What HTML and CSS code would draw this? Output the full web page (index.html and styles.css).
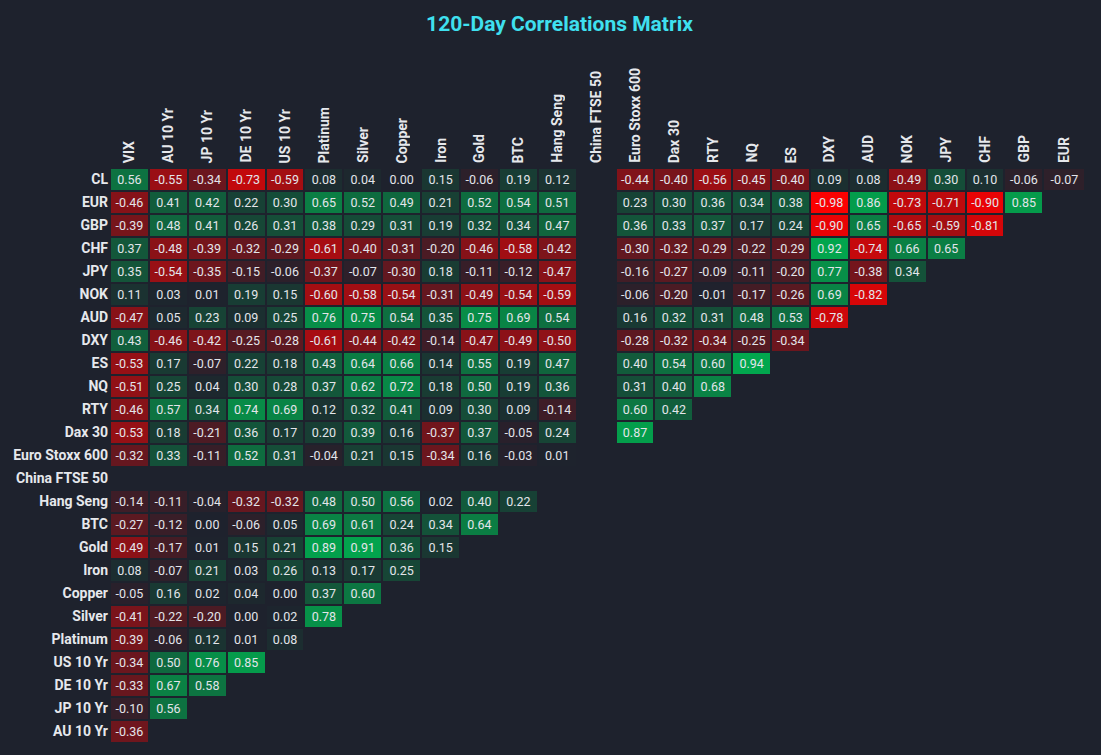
FILE: index.html
```html
<!DOCTYPE html>
<html lang="en">
<head>
<meta charset="utf-8">
<title>120-Day Correlations Matrix</title>
<link rel="stylesheet" href="styles.css">
</head>
<body>
<main class="page">
  <h1 class="title">120-Day Correlations Matrix</h1>
  <div class="matrix" id="matrix"></div>
</main>
<script src="script.js"></script>
</body>
</html>
```

FILE: styles.css
```css
html, body {
  margin: 0;
  background: #1e222d;
}

body {
  font-family: Roboto, "Liberation Sans", Arial, sans-serif;
  color: #e3e5ea;
}

.page {
  padding: 11px 0 0 8px;
}

.title {
  margin: 0;
  padding-left: 10px;
  text-align: center;
  font-size: 21px;
  line-height: 26px;
  font-weight: 700;
  color: #3fe0ef;
}

.matrix {
  display: grid;
  grid-template-columns: 101px repeat(24, 36.9px) 40px;
  grid-template-rows: 130px;
  grid-auto-rows: 21px;
  gap: 2px;
}

.corner {
  min-width: 0;
}

.hdr {
  display: flex;
  align-items: flex-end;
  justify-content: center;
  padding-bottom: 4px;
  overflow: visible;
}

.hdr-text {
  writing-mode: vertical-rl;
  transform: rotate(180deg);
  white-space: nowrap;
  font-size: 14px;
  font-weight: 700;
  line-height: 1;
  color: #e6e8ec;
}

.row-label {
  text-align: right;
  padding-right: 1px;
  white-space: nowrap;
  font-size: 14px;
  font-weight: 700;
  line-height: 21px;
  color: #e6e8ec;
}

.cell {
  text-align: center;
  font-size: 12.5px;
  line-height: 21px;
  color: #e3e5ea;
}

.cell-empty {
  background: transparent;
}
```

FILE: script.js
```js
(function () {
  var cols = ["VIX", "AU 10 Yr", "JP 10 Yr", "DE 10 Yr", "US 10 Yr", "Platinum", "Silver", "Copper", "Iron", "Gold", "BTC", "Hang Seng", "China FTSE 50", "Euro Stoxx 600", "Dax 30", "RTY", "NQ", "ES", "DXY", "AUD", "NOK", "JPY", "CHF", "GBP", "EUR"];
  var N = null;
  var rows = [
    ["CL", [0.56, -0.55, -0.34, -0.73, -0.59, 0.08, 0.04, 0.00, 0.15, -0.06, 0.19, 0.12, N, -0.44, -0.40, -0.56, -0.45, -0.40, 0.09, 0.08, -0.49, 0.30, 0.10, -0.06, -0.07]],
    ["EUR", [-0.46, 0.41, 0.42, 0.22, 0.30, 0.65, 0.52, 0.49, 0.21, 0.52, 0.54, 0.51, N, 0.23, 0.30, 0.36, 0.34, 0.38, -0.98, 0.86, -0.73, -0.71, -0.90, 0.85]],
    ["GBP", [-0.39, 0.48, 0.41, 0.26, 0.31, 0.38, 0.29, 0.31, 0.19, 0.32, 0.34, 0.47, N, 0.36, 0.33, 0.37, 0.17, 0.24, -0.90, 0.65, -0.65, -0.59, -0.81]],
    ["CHF", [0.37, -0.48, -0.39, -0.32, -0.29, -0.61, -0.40, -0.31, -0.20, -0.46, -0.58, -0.42, N, -0.30, -0.32, -0.29, -0.22, -0.29, 0.92, -0.74, 0.66, 0.65]],
    ["JPY", [0.35, -0.54, -0.35, -0.15, -0.06, -0.37, -0.07, -0.30, 0.18, -0.11, -0.12, -0.47, N, -0.16, -0.27, -0.09, -0.11, -0.20, 0.77, -0.38, 0.34]],
    ["NOK", [0.11, 0.03, 0.01, 0.19, 0.15, -0.60, -0.58, -0.54, -0.31, -0.49, -0.54, -0.59, N, -0.06, -0.20, -0.01, -0.17, -0.26, 0.69, -0.82]],
    ["AUD", [-0.47, 0.05, 0.23, 0.09, 0.25, 0.76, 0.75, 0.54, 0.35, 0.75, 0.69, 0.54, N, 0.16, 0.32, 0.31, 0.48, 0.53, -0.78]],
    ["DXY", [0.43, -0.46, -0.42, -0.25, -0.28, -0.61, -0.44, -0.42, -0.14, -0.47, -0.49, -0.50, N, -0.28, -0.32, -0.34, -0.25, -0.34]],
    ["ES", [-0.53, 0.17, -0.07, 0.22, 0.18, 0.43, 0.64, 0.66, 0.14, 0.55, 0.19, 0.47, N, 0.40, 0.54, 0.60, 0.94]],
    ["NQ", [-0.51, 0.25, 0.04, 0.30, 0.28, 0.37, 0.62, 0.72, 0.18, 0.50, 0.19, 0.36, N, 0.31, 0.40, 0.68]],
    ["RTY", [-0.46, 0.57, 0.34, 0.74, 0.69, 0.12, 0.32, 0.41, 0.09, 0.30, 0.09, -0.14, N, 0.60, 0.42]],
    ["Dax 30", [-0.53, 0.18, -0.21, 0.36, 0.17, 0.20, 0.39, 0.16, -0.37, 0.37, -0.05, 0.24, N, 0.87]],
    ["Euro Stoxx 600", [-0.32, 0.33, -0.11, 0.52, 0.31, -0.04, 0.21, 0.15, -0.34, 0.16, -0.03, 0.01]],
    ["China FTSE 50", []],
    ["Hang Seng", [-0.14, -0.11, -0.04, -0.32, -0.32, 0.48, 0.50, 0.56, 0.02, 0.40, 0.22]],
    ["BTC", [-0.27, -0.12, 0.00, -0.06, 0.05, 0.69, 0.61, 0.24, 0.34, 0.64]],
    ["Gold", [-0.49, -0.17, 0.01, 0.15, 0.21, 0.89, 0.91, 0.36, 0.15]],
    ["Iron", [0.08, -0.07, 0.21, 0.03, 0.26, 0.13, 0.17, 0.25]],
    ["Copper", [-0.05, 0.16, 0.02, 0.04, 0.00, 0.37, 0.60]],
    ["Silver", [-0.41, -0.22, -0.20, 0.00, 0.02, 0.78]],
    ["Platinum", [-0.39, -0.06, 0.12, 0.01, 0.08]],
    ["US 10 Yr", [-0.34, 0.50, 0.76, 0.85]],
    ["DE 10 Yr", [-0.33, 0.67, 0.58]],
    ["JP 10 Yr", [-0.10, 0.56]],
    ["AU 10 Yr", [-0.36]]
  ];

  var bg = [30, 34, 45];
  var pos = [0, 176, 80];
  var neg = [255, 0, 0];

  function colour(v) {
    var end = v >= 0 ? pos : neg;
    var t = Math.min(1, Math.abs(v));
    var c = [];
    for (var i = 0; i < 3; i++) {
      c.push(Math.round(bg[i] + (end[i] - bg[i]) * t));
    }
    return "rgb(" + c.join(",") + ")";
  }

  var m = document.getElementById("matrix");

  function el(cls, text) {
    var d = document.createElement("div");
    d.className = cls;
    if (text !== undefined) d.textContent = text;
    return d;
  }

  m.appendChild(el("corner"));
  cols.forEach(function (c) {
    var h = el("hdr");
    var s = document.createElement("span");
    s.className = "hdr-text";
    s.textContent = c;
    h.appendChild(s);
    m.appendChild(h);
  });

  rows.forEach(function (r) {
    m.appendChild(el("row-label", r[0]));
    for (var i = 0; i < cols.length; i++) {
      var v = r[1][i];
      if (v === null || v === undefined) {
        m.appendChild(el("cell cell-empty"));
      } else {
        var d = el("cell", v.toFixed(2));
        d.style.background = colour(v);
        m.appendChild(d);
      }
    }
  });
})();
```
